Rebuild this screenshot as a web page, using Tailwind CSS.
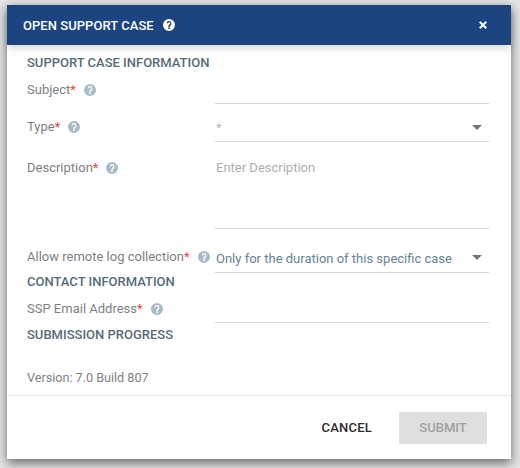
<!DOCTYPE html>
<html lang="en">
  <head>
    <meta charset="UTF-8" />
    <title>Open Support Case</title>
    <script src="https://cdn.jsdelivr.net/npm/@tailwindcss/browser@4"></script>
  </head>
  <body class="w-[520px] h-[468px] overflow-hidden bg-[#e4e4e4] font-['Roboto',sans-serif]">
    <div class="ml-[7px] pt-[5px]">
      <div class="w-[504px] h-[454px] bg-white flex flex-col shadow-[0_4px_10px_rgba(0,0,0,0.55)]">

        <!-- Header -->
        <div class="h-10 shrink-0 bg-[#1c4480] flex items-center pl-4 pr-6 text-white shadow-[0_3px_8px_rgba(0,0,0,0.16)] relative">
          <span class="text-[13px] font-medium leading-none tracking-[0.05px]">OPEN SUPPORT CASE</span>
          <svg class="w-3 h-3 ml-[9px]" viewBox="0 0 24 24" fill="currentColor"><path d="M12 0a12 12 0 1 0 0 24 12 12 0 0 0 0-24zm1.700 20h-3.400v-3.200h3.400V20zm2.800-8.100-1.200 1.300c-1 1-1.600 1.700-1.600 3h-3.200v-.7c0-1.400.6-2.600 1.600-3.600l1.700-1.800c.5-.4.700-1 .7-1.600 0-1.200-1-2.100-2.100-2.100s-2.100.9-2.100 2.100H7.300a4.700 4.700 0 0 1 9.400 0c0 1.200-.2 2.400-.2 3.400z"/></svg>
          <svg class="w-2 h-2 ml-auto" viewBox="0 0 8 8" stroke="currentColor" stroke-width="2"><path d="M.7.7l6.600 6.600M7.300.7.700 7.300"/></svg>
        </div>

        <!-- Form -->
        <div class="flex-1 pl-5 pr-[22px] text-[13px] leading-4 text-[#7d8184]">
          <h3 class="h-[28px] pt-[10px] font-medium text-[#566c79]">SUPPORT CASE INFORMATION</h3>

          <div class="flex h-[31px]">
            <div class="w-[188px] flex items-start pt-[9px]">
              <span>Subject<span class="text-[#f44336]">*</span></span>
              <svg class="w-3 h-3 ml-[8px] mt-[2px] text-[#a9bbc6]" viewBox="0 0 24 24" fill="currentColor"><path d="M12 0a12 12 0 1 0 0 24 12 12 0 0 0 0-24zm1.700 20h-3.400v-3.200h3.400V20zm2.800-8.100-1.200 1.300c-1 1-1.600 1.700-1.600 3h-3.200v-.7c0-1.400.6-2.600 1.600-3.600l1.700-1.800c.5-.4.700-1 .7-1.600 0-1.200-1-2.100-2.100-2.100s-2.100.9-2.100 2.100H7.300a4.700 4.700 0 0 1 9.400 0c0 1.200-.2 2.400-.2 3.400z"/></svg>
            </div>
            <div class="flex-1 border-b border-[#cfd8d8]"></div>
          </div>

          <div class="flex h-[38px]">
            <div class="w-[188px] flex items-start pt-[15px]">
              <span>Type<span class="text-[#f44336]">*</span></span>
              <svg class="w-3 h-3 ml-[8px] mt-[2px] text-[#a9bbc6]" viewBox="0 0 24 24" fill="currentColor"><path d="M12 0a12 12 0 1 0 0 24 12 12 0 0 0 0-24zm1.700 20h-3.400v-3.200h3.400V20zm2.800-8.100-1.200 1.300c-1 1-1.600 1.700-1.600 3h-3.200v-.7c0-1.400.6-2.600 1.600-3.600l1.700-1.800c.5-.4.700-1 .7-1.600 0-1.200-1-2.100-2.100-2.100s-2.100.9-2.100 2.100H7.300a4.700 4.700 0 0 1 9.400 0c0 1.200-.2 2.400-.2 3.400z"/></svg>
            </div>
            <div class="flex-1 border-b border-[#cfd8d8] flex items-start pt-[16px] pl-[1px] pr-[7px] justify-between text-[#b3b8ba]">
              <span>*</span>
              <span class="mt-[5px] w-0 h-0 border-x-[5px] border-x-transparent border-t-[5px] border-t-[#757575]"></span>
            </div>
          </div>

          <div class="flex h-[87px]">
            <div class="w-[188px] flex items-start pt-[18px]">
              <span>Description<span class="text-[#f44336]">*</span></span>
              <svg class="w-3 h-3 ml-[8px] mt-[2px] text-[#a9bbc6]" viewBox="0 0 24 24" fill="currentColor"><path d="M12 0a12 12 0 1 0 0 24 12 12 0 0 0 0-24zm1.700 20h-3.400v-3.200h3.400V20zm2.800-8.100-1.200 1.300c-1 1-1.600 1.700-1.600 3h-3.200v-.7c0-1.400.6-2.600 1.600-3.600l1.700-1.800c.5-.4.700-1 .7-1.600 0-1.200-1-2.100-2.100-2.100s-2.100.9-2.100 2.100H7.300a4.700 4.700 0 0 1 9.400 0c0 1.200-.2 2.400-.2 3.400z"/></svg>
            </div>
            <div class="flex-1 border-b border-[#cfd8d8] pt-[18px] pl-[1px] text-[#aab0b3]">Enter Description</div>
          </div>

          <div class="flex h-[44px]">
            <div class="w-[188px] flex items-start pt-[20px] whitespace-nowrap">
              <span>Allow remote log collection<span class="text-[#f44336]">*</span></span>
              <svg class="w-3 h-3 ml-[8px] mt-[2px] text-[#a9bbc6]" viewBox="0 0 24 24" fill="currentColor"><path d="M12 0a12 12 0 1 0 0 24 12 12 0 0 0 0-24zm1.700 20h-3.400v-3.200h3.400V20zm2.800-8.100-1.200 1.300c-1 1-1.600 1.700-1.600 3h-3.200v-.7c0-1.400.6-2.600 1.600-3.600l1.700-1.800c.5-.4.700-1 .7-1.600 0-1.200-1-2.100-2.100-2.100s-2.100.9-2.100 2.100H7.300a4.700 4.700 0 0 1 9.400 0c0 1.200-.2 2.400-.2 3.400z"/></svg>
            </div>
            <div class="flex-1 border-b border-[#cfd8d8] flex items-start pt-[22px] pl-[1px] pr-[7px] justify-between text-[#648494]">
              <span>Only for the duration of this specific case</span>
              <span class="mt-[4px] w-0 h-0 border-x-[5px] border-x-transparent border-t-[5px] border-t-[#757575]"></span>
            </div>
          </div>

          <h3 class="h-[17px] pt-[1px] font-medium text-[#566c79]">CONTACT INFORMATION</h3>

          <div class="flex h-[33px]">
            <div class="w-[188px] flex items-start pt-[11px]">
              <span>SSP Email Address<span class="text-[#f44336]">*</span></span>
              <svg class="w-3 h-3 ml-[8px] mt-[2px] text-[#a9bbc6]" viewBox="0 0 24 24" fill="currentColor"><path d="M12 0a12 12 0 1 0 0 24 12 12 0 0 0 0-24zm1.700 20h-3.400v-3.200h3.400V20zm2.800-8.100-1.200 1.300c-1 1-1.600 1.700-1.600 3h-3.200v-.7c0-1.400.6-2.600 1.600-3.600l1.700-1.800c.5-.4.700-1 .7-1.600 0-1.200-1-2.100-2.100-2.100s-2.100.9-2.100 2.100H7.300a4.700 4.700 0 0 1 9.400 0c0 1.200-.2 2.400-.2 3.400z"/></svg>
            </div>
            <div class="flex-1 border-b border-[#cfd8d8]"></div>
          </div>

          <h3 class="pt-[4px] font-medium text-[#566c79]">SUBMISSION PROGRESS</h3>
          <p class="mt-[27px] text-[12.6px]">Version: 7.0 Build 807</p>
        </div>

        <!-- Footer -->
        <div class="h-[64px] shrink-0 border-t border-[#eaeaee] flex items-start justify-end pt-4 pr-6">
          <button class="h-8 mr-[27px] text-[13px] font-medium tracking-[0.2px] text-[#2b2b2b]">CANCEL</button>
          <button class="w-[88px] h-8 rounded-[2px] bg-[#dfdfdf] text-[13px] font-medium text-[#a0a0a0]">SUBMIT</button>
        </div>
      </div>
    </div>
  </body>
</html>
